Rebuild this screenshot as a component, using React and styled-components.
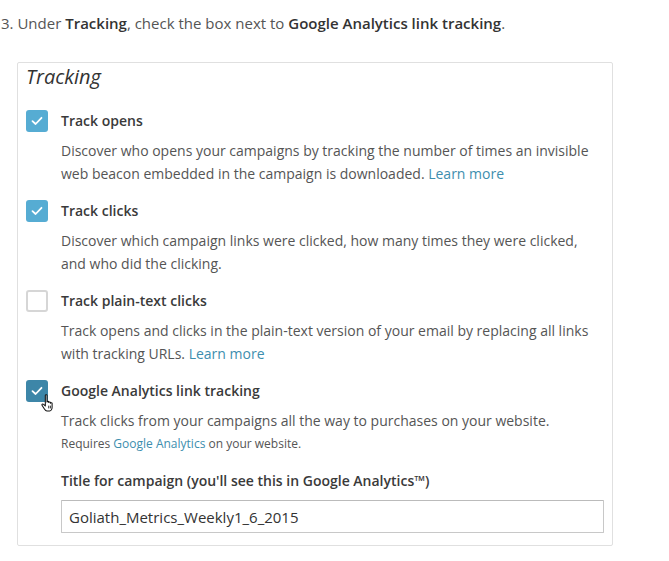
import React from 'react';
import styled, {createGlobalStyle} from "styled-components";

const GlobalStyle = createGlobalStyle`
  body {
    margin: 0;
    background: #fff;
    font-family: "Open Sans", "Liberation Sans", sans-serif;
  }
`;

const Page = styled.div`
  width: 669px;
  height: 561px;
  box-sizing: border-box;
  padding: 12px 0 0 0;
`;

const Step = styled.p`
  margin: 0 0 28px 1px;
  font-size: 15px;
  line-height: 22px;
  color: #555;

  b {
    font-weight: 600;
    color: #333;
  }
`;

const Panel = styled.div`
  margin-left: 17px;
  width: 596px;
  box-sizing: border-box;
  border: 1px solid #e0e0e0;
  border-radius: 2px;
  padding: 0 9px 12px 8px;
`;

const Legend = styled.h2`
  margin: 0;
  padding-top: 1px;
  font-size: 20px;
  line-height: 26px;
  font-style: italic;
  font-weight: 400;
  color: #333;
`;

const Option = styled.div`
  display: grid;
  grid-template-columns: 22px 1fr;
  column-gap: 13px;
  margin-top: ${p => p.$first ? "20px" : "15px"};
`;

const Box = styled.span`
  position: relative;
  width: 22px;
  height: 22px;
  box-sizing: border-box;
  border-radius: 3px;
  display: flex;
  align-items: center;
  justify-content: center;
  background: ${p => p.$hover ? "#3d86a8" : p.$checked ? "#56acd3" : "#fff"};
  border: ${p => p.$checked ? "none" : "2px solid #d6d6d6"};
`;

const Label = styled.div`
  font-size: 14px;
  line-height: 22px;
  font-weight: 600;
  color: #3a3a3a;
`;

const Desc = styled.p`
  grid-column: 2;
  margin: 7px 0 0;
  font-size: 14px;
  line-height: 23px;
  color: #555;
`;

const Note = styled.p`
  grid-column: 2;
  margin: 0;
  font-size: 12px;
  line-height: 23px;
  color: #555;
`;

const Link = styled.a`
  color: #3d8eae;
  text-decoration: none;
`;

const FieldLabel = styled.div`
  grid-column: 2;
  margin-top: 15px;
  font-size: 14px;
  line-height: 22px;
  font-weight: 600;
  color: #3a3a3a;
`;

const Input = styled.input`
  grid-column: 2;
  margin-top: 8px;
  width: 543px;
  height: 33px;
  box-sizing: border-box;
  border: 1px solid #c8c8c8;
  border-top-color: #bbb;
  border-radius: 1px;
  padding: 0 7px;
  font-family: "Open Sans", "Liberation Sans", sans-serif;
  font-size: 15px;
  color: #333;
  outline: none;
`;

const Cursor = styled.svg`
  position: absolute;
  left: 15px;
  top: 14px;
`;

const Check = () => (
  <svg width="12" height="10" viewBox="0 0 12 10">
    <path d="M1.5 5.2 L4.6 8 L10.5 1.8" fill="none" stroke="#fff" strokeWidth="1.8" strokeLinecap="round" strokeLinejoin="round"/>
  </svg>
);

const Hand = () => (
  <Cursor width="15" height="18" viewBox="0 0 14 17">
    <path d="M4 1.2c0-.7 1.6-.7 1.6 0v6.3c0-.8 1.6-.8 1.6 0v.6c0-.8 1.6-.8 1.6 0v.7c0-.8 1.6-.8 1.6 0v3.8c0 1.5-1 3.4-2.3 3.4H5.5c-1 0-1.6-.7-2.2-1.6L1 10.8c-.6-.8.5-1.9 1.3-1.1L4 11.3z"
          fill="#fff" stroke="#111" strokeWidth="1" strokeLinejoin="round"/>
    <path d="M7.2 11v2.6M8.8 11v2.6" stroke="#111" strokeWidth=".8"/>
  </Cursor>
);

const App = () => {
  return (
    <>
      <GlobalStyle/>
      <Page>
        <Step>3. Under <b>Tracking</b>, check the box next to <b>Google Analytics link tracking</b>.</Step>
        <Panel>
          <Legend>Tracking</Legend>

          <Option $first>
            <Box $checked><Check/></Box>
            <Label>Track opens</Label>
            <Desc>
              Discover who opens your campaigns by tracking the number of times an invisible
              web beacon embedded in the campaign is downloaded. <Link href="#">Learn more</Link>
            </Desc>
          </Option>

          <Option>
            <Box $checked><Check/></Box>
            <Label>Track clicks</Label>
            <Desc>
              Discover which campaign links were clicked, how many times they were clicked,
              and who did the clicking.
            </Desc>
          </Option>

          <Option>
            <Box/>
            <Label>Track plain-text clicks</Label>
            <Desc>
              Track opens and clicks in the plain-text version of your email by replacing all links
              with tracking URLs. <Link href="#">Learn more</Link>
            </Desc>
          </Option>

          <Option>
            <Box $checked $hover><Check/><Hand/></Box>
            <Label>Google Analytics link tracking</Label>
            <Desc>Track clicks from your campaigns all the way to purchases on your website.</Desc>
            <Note>Requires <Link href="#">Google Analytics</Link> on your website.</Note>
            <FieldLabel>Title for campaign (you'll see this in Google Analytics™)</FieldLabel>
            <Input defaultValue="Goliath_Metrics_Weekly1_6_2015"/>
          </Option>
        </Panel>
      </Page>
    </>
  );
};

export default App;
